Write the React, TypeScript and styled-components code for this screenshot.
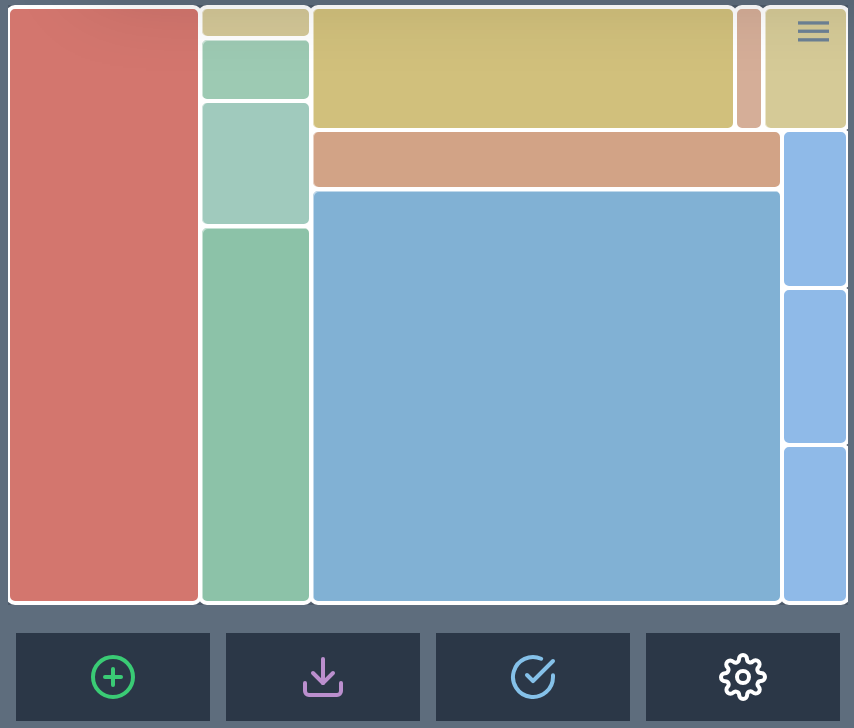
import React from "react";
import styled, { createGlobalStyle } from "styled-components";
import { FiCheckCircle, FiDownload, FiPlusCircle, FiSettings } from "react-icons/fi";

const GlobalStyle = createGlobalStyle`
  *, *::before, *::after { box-sizing: border-box; }
  body { margin: 0; background: #5e6d7d; font-family: "Liberation Sans", sans-serif; }
`;

const Page = styled.main`
  position: relative;
  display: flex;
  flex-direction: column;
  width: 854px;
  height: 728px;
  padding: 5px 6px 7px 8px;
  overflow: hidden;
  background: #5e6d7d;
`;

const Treemap = styled.section`
  display: grid;
  grid-template-columns: 192.4px 110.9px 536.7px;
  width: 840px;
  height: 600px;
  padding: 2px 0;
  overflow: hidden;
  background: #4e5b6b;
`;

const Rows = styled.div<{ $sizes: string }>`
  display: grid;
  grid-template-rows: ${(p) => p.$sizes};
  min-width: 0;
`;

const Columns = styled.div<{ $sizes: string }>`
  display: grid;
  grid-template-columns: ${(p) => p.$sizes};
  min-height: 0;
`;

/* $soften lightens the left edge (x) and top edge (y) of the fill, in pixels */
const Cell = styled.div<{ $color: string; $soften?: string }>`
  margin: -2px;
  border: 4px solid #fff;
  border-radius: 9px;
  background: ${(p) => p.$color};
  box-shadow: ${(p) => (p.$soften ? `inset ${p.$soften} 0 rgba(255, 255, 255, 0.5)` : "none")};
`;

/* A panel parked above the viewport; only its shadow reaches the page */
const TopShade = styled.div`
  position: absolute;
  top: -310px;
  left: 90px;
  right: -150px;
  height: 300px;
  pointer-events: none;
  box-shadow: 0 0 80px rgba(0, 0, 0, 0.16);
`;

const MenuButton = styled.button`
  position: absolute;
  top: 21px;
  right: 25px;
  display: flex;
  padding: 0;
  border: 0;
  background: none;
`;

const Actions = styled.nav`
  display: grid;
  grid-template-columns: repeat(4, 194px);
  gap: 16px;
  margin: 28px 0 0 8px;
`;

const ActionButton = styled.button<{ $color: string }>`
  display: flex;
  align-items: center;
  justify-content: center;
  height: 88px;
  padding: 0;
  border: 0;
  background: #2b3747;
  color: ${(p) => p.$color};
`;

function MenuIcon() {
  return (
    <svg width="31" height="21" viewBox="0 0 31 21" fill="#6a7e91">
      <rect y="0.3" width="31" height="3.3" />
      <rect y="8.6" width="31" height="3.3" />
      <rect y="17.2" width="31" height="3.3" />
    </svg>
  );
}

export default function App() {
  return (
    <>
      <GlobalStyle />
      <Page>
        <Treemap>
          <Cell $color="#d3766e" />
          <Rows $sizes="31.3px 62.7px 125.4px 1fr">
            <Cell $color="#d3c797" $soften="1px 0" />
            <Cell $color="#9dcab3" $soften="1px 1px" />
            <Cell $color="#a0cabd" $soften="1px 0" />
            <Cell $color="#8cc2a8" $soften="1px 1px" />
          </Rows>
          <Rows $sizes="123px 1fr">
            <Columns $sizes="423.7px 28px 1fr">
              <Cell $color="#d1c07c" $soften="1px 0" />
              <Cell $color="#d5ae98" />
              <Cell $color="#d5ca97" $soften="1px 0" />
            </Columns>
            <Columns $sizes="470.7px 1fr">
              <Rows $sizes="59.2px 1fr">
                <Cell $color="#d2a386" $soften="1px 0" />
                <Cell $color="#81b1d4" $soften="1px 1px" />
              </Rows>
              <Rows $sizes="repeat(3, 1fr)">
                <Cell $color="#8fbae8" />
                <Cell $color="#8fbae8" />
                <Cell $color="#8fbae8" />
              </Rows>
            </Columns>
          </Rows>
        </Treemap>
        <Actions>
          <ActionButton $color="#3acb75" aria-label="Add"><FiPlusCircle size={48} /></ActionButton>
          <ActionButton $color="#bb8fce" aria-label="Download"><FiDownload size={48} /></ActionButton>
          <ActionButton $color="#85c1e9" aria-label="Complete"><FiCheckCircle size={48} /></ActionButton>
          <ActionButton $color="#ffffff" aria-label="Settings"><FiSettings size={48} /></ActionButton>
        </Actions>
        <TopShade />
        <MenuButton aria-label="Menu">
          <MenuIcon />
        </MenuButton>
      </Page>
    </>
  );
}
